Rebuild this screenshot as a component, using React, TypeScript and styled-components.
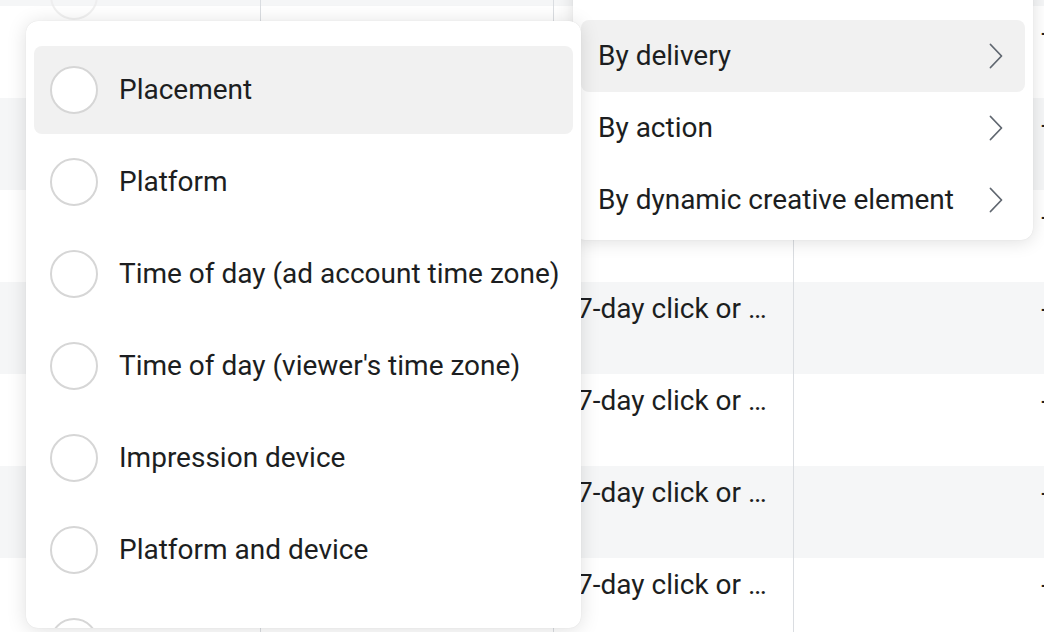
import React from "react";
import styled, { createGlobalStyle } from "styled-components";

const Global = createGlobalStyle`
  html, body { margin: 0; padding: 0; background: #ffffff; }
  body { font-family: Roboto, "Liberation Sans", Arial, sans-serif; color: #1c1e21; }
  * { box-sizing: border-box; }
`;

const Page = styled.div`
  position: relative;
  width: 1044px;
  height: 632px;
  overflow: hidden;
  background: #fff;
`;

const Table = styled.div`
  display: grid;
  grid-template-columns: 260px 293px 240px 272px;
  grid-auto-rows: 92px;
  margin-top: -86px;
  width: 1065px;
`;

const Cell = styled.div<{ $shade: boolean; $first?: boolean; $align?: string }>`
  background: ${(p) => (p.$shade ? "#f5f6f7" : "#ffffff")};
  border-left: ${(p) => (p.$first ? "none" : "1px solid #dadde1")};
  padding: 10px 16px 0 23px;
  font-size: 28px;
  line-height: 34px;
  color: #1c1e21;
  text-align: ${(p) => p.$align || "left"};
  white-space: nowrap;
  overflow: hidden;
`;

const Ghost = styled.div`
  position: absolute;
  left: 50px;
  top: -28px;
  width: 48px;
  height: 48px;
  border-radius: 50%;
  border: 2px solid #ececec;
  opacity: 0.8;
`;

const MainMenu = styled.div`
  position: absolute;
  left: 26px;
  top: 21px;
  width: 555px;
  height: 607px;
  background: #fff;
  border-radius: 12px;
  overflow: hidden;
  box-shadow: 0 2px 20px rgba(0, 0, 0, 0.13), 0 0 1px rgba(0, 0, 0, 0.12);
  padding: 25px 8px 0 8px;
  display: flex;
  flex-direction: column;
  gap: 4px;
  z-index: 2;
`;

const RadioItem = styled.div<{ $active?: boolean }>`
  flex: 0 0 88px;
  display: flex;
  align-items: center;
  gap: 21px;
  padding-left: 16px;
  border-radius: 8px;
  background: ${(p) => (p.$active ? "#f1f1f1" : "transparent")};
`;

const Radio = styled.span`
  flex: 0 0 48px;
  width: 48px;
  height: 48px;
  border-radius: 50%;
  border: 2px solid #d6d6d6;
  background: #fff;
`;

const Label = styled.span`
  font-size: 28px;
  line-height: 34px;
  color: #1c1e21;
  white-space: nowrap;
`;

const SubMenu = styled.div`
  position: absolute;
  left: 573px;
  top: -20px;
  width: 460px;
  height: 260px;
  background: #fff;
  border-radius: 12px;
  box-shadow: 0 2px 18px rgba(0, 0, 0, 0.13), 0 0 1px rgba(0, 0, 0, 0.12);
  padding: 40px 8px 4px 8px;
  display: flex;
  flex-direction: column;
  z-index: 1;
`;

const SubItem = styled.div<{ $active?: boolean }>`
  flex: 0 0 72px;
  display: flex;
  align-items: center;
  justify-content: space-between;
  padding: 0 22px 0 17px;
  border-radius: 8px;
  background: ${(p) => (p.$active ? "#f1f1f1" : "transparent")};
`;

const Chevron = () => (
  <svg width="14" height="26" viewBox="0 0 14 26" fill="none">
    <path d="M1.5 1.5 L12.5 13 L1.5 24.5" stroke="#606770" strokeWidth="1.8" strokeLinecap="round" strokeLinejoin="round" />
  </svg>
);

const radioItems = [
  "Placement",
  "Platform",
  "Time of day (ad account time zone)",
  "Time of day (viewer's time zone)",
  "Impression device",
  "Platform and device",
  "Product ID",
];

const subItems = ["By delivery", "By action", "By dynamic creative element"];

export default function App() {
  const rows = Array.from({ length: 8 }, (_, i) => i);
  return (
    <>
      <Global />
      <Page>
        <Table>
          {rows.map((r) => {
            const shade = r % 2 === 0;
            return (
              <React.Fragment key={r}>
                <Cell $shade={shade} $first />
                <Cell $shade={shade} />
                <Cell $shade={shade}>{r >= 4 ? "7-day click or …" : ""}</Cell>
                <Cell $shade={shade} $align="right">-</Cell>
              </React.Fragment>
            );
          })}
        </Table>
        <Ghost />
        <SubMenu>
          {subItems.map((s, i) => (
            <SubItem key={s} $active={i === 0}>
              <Label>{s}</Label>
              <Chevron />
            </SubItem>
          ))}
        </SubMenu>
        <MainMenu>
          {radioItems.map((t, i) => (
            <RadioItem key={t} $active={i === 0}>
              <Radio />
              <Label>{t}</Label>
            </RadioItem>
          ))}
        </MainMenu>
      </Page>
    </>
  );
}
